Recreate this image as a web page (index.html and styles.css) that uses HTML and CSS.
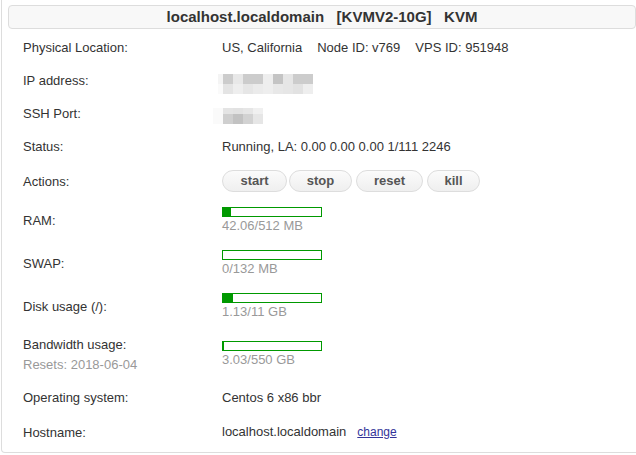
FILE: index.html
```html
<!DOCTYPE html>
<html>
<head>
<meta charset="utf-8">
<link rel="stylesheet" href="styles.css">
</head>
<body>
<div class="panel">
  <div class="header">localhost.localdomain&nbsp;&nbsp;&nbsp;[KVMV2-10G]&nbsp;&nbsp;&nbsp;KVM</div>
  <div class="rows">
    <div class="row">
      <div class="label">Physical Location:</div>
      <div class="value">US, California<span class="sep">Node ID: v769</span><span class="sep">VPS ID: 951948</span></div>
    </div>
    <div class="row">
      <div class="label">IP address:</div>
      <div class="value">
        <svg class="blur ip" width="96" height="20" viewBox="0 0 96 20">
          <rect x="0" y="0" width="5" height="10" fill="#f4f4f4"/>
          <rect x="5" y="0" width="10" height="10" fill="#cccccc"/>
          <rect x="15" y="0" width="10" height="10" fill="#e8e8e8"/>
          <rect x="25" y="0" width="20" height="10" fill="#cccccc"/>
          <rect x="45" y="0" width="10" height="10" fill="#eeeeee"/>
          <rect x="55" y="0" width="10" height="10" fill="#c4c4c4"/>
          <rect x="65" y="0" width="10" height="10" fill="#e6e6e6"/>
          <rect x="75" y="0" width="20" height="10" fill="#cccccc"/>
          <rect x="0" y="10" width="5" height="10" fill="#fafafa"/>
          <rect x="5" y="10" width="10" height="10" fill="#e4e4e4"/>
          <rect x="15" y="10" width="10" height="10" fill="#eeeeee"/>
          <rect x="25" y="10" width="10" height="10" fill="#e6e6e6"/>
          <rect x="35" y="10" width="10" height="10" fill="#ebebeb"/>
          <rect x="45" y="10" width="10" height="10" fill="#eeeeee"/>
          <rect x="55" y="10" width="10" height="10" fill="#e8e8e8"/>
          <rect x="65" y="10" width="10" height="10" fill="#e6e6e6"/>
          <rect x="75" y="10" width="10" height="10" fill="#e2e2e2"/>
          <rect x="85" y="10" width="10" height="10" fill="#eeeeee"/>
        </svg>
      </div>
    </div>
    <div class="row">
      <div class="label">SSH Port:</div>
      <div class="value">
        <svg class="blur ssh" width="50" height="16" viewBox="0 0 50 16">
          <rect x="0" y="0" width="10" height="6" fill="#fafafa"/>
          <rect x="10" y="0" width="10" height="6" fill="#e4e4e4"/>
          <rect x="20" y="0" width="10" height="6" fill="#e2e2e2"/>
          <rect x="30" y="0" width="10" height="6" fill="#e6e6e6"/>
          <rect x="40" y="0" width="10" height="6" fill="#f0f0f0"/>
          <rect x="0" y="6" width="10" height="10" fill="#fafafa"/>
          <rect x="10" y="6" width="10" height="10" fill="#cfcfcf"/>
          <rect x="20" y="6" width="10" height="10" fill="#c2c2c2"/>
          <rect x="30" y="6" width="10" height="10" fill="#d2d2d2"/>
          <rect x="40" y="6" width="10" height="10" fill="#e6e6e6"/>
        </svg>
      </div>
    </div>
    <div class="row">
      <div class="label">Status:</div>
      <div class="value">Running, LA: 0.00 0.00 0.00 1/111 2246</div>
    </div>
    <div class="row actions">
      <div class="label">Actions:</div>
      <div class="value buttons">
        <button class="btn b-start">start</button>
        <button class="btn b-stop">stop</button>
        <button class="btn b-reset">reset</button>
        <button class="btn b-kill">kill</button>
      </div>
    </div>
    <div class="row usage">
      <div class="label">RAM:</div>
      <div class="value">
        <div class="bar"><div class="fill" style="width:8%"></div></div>
        <div class="muted">42.06/512 MB</div>
      </div>
    </div>
    <div class="row usage">
      <div class="label">SWAP:</div>
      <div class="value">
        <div class="bar"><div class="fill" style="width:0%"></div></div>
        <div class="muted">0/132 MB</div>
      </div>
    </div>
    <div class="row usage">
      <div class="label">Disk usage (/):</div>
      <div class="value">
        <div class="bar"><div class="fill" style="width:10%"></div></div>
        <div class="muted">1.13/11 GB</div>
      </div>
    </div>
    <div class="row usage">
      <div class="label">
        <div class="l1">Bandwidth usage:</div>
        <div class="l2 muted">Resets: 2018-06-04</div>
      </div>
      <div class="value">
        <div class="bar"><div class="fill" style="width:1%"></div></div>
        <div class="muted">3.03/550 GB</div>
      </div>
    </div>
    <div class="row">
      <div class="label">Operating system:</div>
      <div class="value">Centos 6 x86 bbr</div>
    </div>
    <div class="row host">
      <div class="label">Hostname:</div>
      <div class="value">localhost.localdomain<a class="change" href="#">change</a></div>
    </div>
  </div>
</div>
</body>
</html>
```

FILE: styles.css
```css
html, body {
  margin: 0;
  padding: 0;
  background: #ffffff;
}

body {
  font-family: "Liberation Sans", Arial, sans-serif;
  font-size: 13px;
  color: #333333;
  overflow: hidden;
}

.panel {
  margin-left: 1px;
  width: 660px;
  height: 453px;
  box-sizing: border-box;
  border: 1px solid #dddddd;
  border-top: 0;
  border-bottom-left-radius: 4px;
  padding: 5px 0 0 6px;
}

.header {
  width: 628px;
  height: 24px;
  box-sizing: border-box;
  border: 1px solid #dddddd;
  border-radius: 4px;
  background: #f8f8f8;
  font-weight: bold;
  font-size: 15px;
  line-height: 22px;
  text-align: center;
  color: #333333;
}

.rows {
  padding-top: 2px;
  padding-left: 15px;
}

.row {
  display: grid;
  grid-template-columns: 199px 1fr;
  align-items: center;
  padding: 9px 0;
  line-height: 15px;
}

.sep {
  margin-left: 15px;
}

.blur {
  display: block;
}

.blur.ip {
  margin-left: -4px;
  margin-top: 1px;
  margin-bottom: -6px;
}

.blur.ssh {
  margin-left: -9px;
  margin-top: 2px;
  margin-bottom: -3px;
}

.actions {
  padding: 7px 0 7px;
}

.buttons {
  display: flex;
  gap: 2px;
}

.btn {
  height: 22px;
  box-sizing: border-box;
  padding: 0;
  border: 1px solid #dddddd;
  border-radius: 11px;
  background: linear-gradient(#fbfbfb, #efefef);
  font-family: "Liberation Sans", Arial, sans-serif;
  font-weight: bold;
  font-size: 13px;
  color: #555555;
  line-height: 20px;
}

.b-start { width: 65px; }
.b-stop { width: 63px; }
.b-reset { width: 67px; margin-left: 2px; }
.b-kill { width: 53px; margin-left: 2px; }

.usage {
  padding: 8px 0;
}

.bar {
  width: 100px;
  height: 10px;
  box-sizing: border-box;
  border: 1px solid #009900;
  background: #ffffff;
  margin-bottom: 1px;
}

.fill {
  height: 100%;
  background: #009900;
}

.muted {
  color: #999999;
  line-height: 16px;
}

.l1 {
  line-height: 17px;
}

.l2 {
  line-height: 17px;
  margin-top: 3px;
}

.host {
  padding: 10px 0 11px;
}

.change {
  margin-left: 11px;
  font-size: 12px;
  color: #333399;
  text-decoration: underline;
}
```
